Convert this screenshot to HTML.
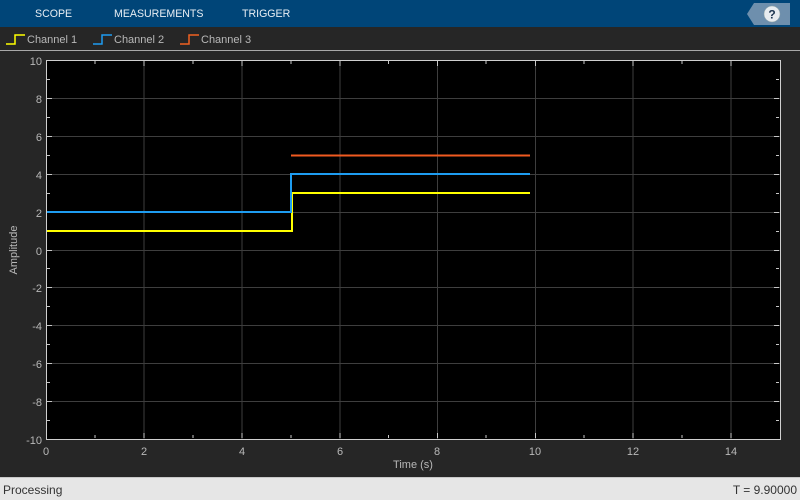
<!DOCTYPE html>
<html><head><style>
html,body{margin:0;padding:0;width:800px;height:500px;overflow:hidden;background:#262626;font-family:"Liberation Sans",sans-serif}
</style></head><body>
<svg width="800" height="500" xmlns="http://www.w3.org/2000/svg" font-family="Liberation Sans, sans-serif">
<rect x="0" y="0" width="800" height="27" fill="#004578"/>
<g fill="#e8eef4" font-size="10.6">
<text x="35" y="17">SCOPE</text>
<text x="114" y="17">MEASUREMENTS</text>
<text x="242" y="17">TRIGGER</text>
</g>
<polygon points="754,3 790,3 790,25 754,25 747,14" fill="#6e8fad"/>
<circle cx="772" cy="14" r="8" fill="#e8ecf0" stroke="#9aa" stroke-width="0.5"/>
<text x="772" y="18.5" text-anchor="middle" font-size="12" font-weight="bold" fill="#1d3550">?</text>
<rect x="0" y="27" width="800" height="23" fill="#262626"/>
<g fill="none" stroke-width="1.5">
<polyline points="6,44 15,44 15,35 25,35" stroke="#ffff00"/>
<polyline points="93,44 102,44 102,35 112,35" stroke="#1e9cf0"/>
<polyline points="180,44 189,44 189,35 199,35" stroke="#f06020"/>
</g>
<g fill="#b8b8b8" font-size="11">
<text x="27" y="43">Channel 1</text>
<text x="114" y="43">Channel 2</text>
<text x="201" y="43">Channel 3</text>
</g>
<line x1="0" y1="50.5" x2="800" y2="50.5" stroke="#a8a8a8"/>
<rect x="46" y="60" width="734" height="379" fill="#000"/>
<g stroke="#3e3e3e" stroke-width="1">
<line x1="144" y1="60" x2="144" y2="439"/><line x1="242" y1="60" x2="242" y2="439"/>
<line x1="340" y1="60" x2="340" y2="439"/><line x1="437.5" y1="60" x2="437.5" y2="439"/>
<line x1="535.5" y1="60" x2="535.5" y2="439"/><line x1="633" y1="60" x2="633" y2="439"/>
<line x1="731" y1="60" x2="731" y2="439"/>
<line x1="46" y1="98.5" x2="780" y2="98.5"/><line x1="46" y1="136.5" x2="780" y2="136.5"/>
<line x1="46" y1="174.5" x2="780" y2="174.5"/><line x1="46" y1="212.5" x2="780" y2="212.5"/>
<line x1="46" y1="250.5" x2="780" y2="250.5"/><line x1="46" y1="287.5" x2="780" y2="287.5"/>
<line x1="46" y1="325.5" x2="780" y2="325.5"/><line x1="46" y1="363.5" x2="780" y2="363.5"/>
<line x1="46" y1="401.5" x2="780" y2="401.5"/>
</g>
<g stroke="#c8c8c8" stroke-width="1">
<path d="M95,61v3M193,61v3M291,61v3M388.5,61v3M486,61v3M584,61v3M682,61v3M95,438v-3M193,438v-3M291,438v-3M388.5,438v-3M486,438v-3M584,438v-3M682,438v-3"/>
<path d="M144,61v5M242,61v5M340,61v5M437.5,61v5M535.5,61v5M633,61v5M731,61v5M144,438v-5M242,438v-5M340,438v-5M437.5,438v-5M535.5,438v-5M633,438v-5M731,438v-5"/>
<path d="M47,79.5h3M47,117.5h3M47,155.5h3M47,193.5h3M47,231.5h3M47,268.5h3M47,306.5h3M47,344.5h3M47,382.5h3M47,420.5h3M779,79.5h-3M779,117.5h-3M779,155.5h-3M779,193.5h-3M779,231.5h-3M779,268.5h-3M779,306.5h-3M779,344.5h-3M779,382.5h-3M779,420.5h-3"/>
<path d="M47,98.5h5M47,136.5h5M47,174.5h5M47,212.5h5M47,250.5h5M47,287.5h5M47,325.5h5M47,363.5h5M47,401.5h5M779,98.5h-5M779,136.5h-5M779,174.5h-5M779,212.5h-5M779,250.5h-5M779,287.5h-5M779,325.5h-5M779,363.5h-5M779,401.5h-5"/>
</g>
<rect x="46.5" y="60.5" width="734" height="379" fill="none" stroke="#d0d0d0"/>
<g fill="none" stroke-width="2">
<polyline points="47,231 292,231 292,193 530,193" stroke="#ffff00"/>
<polyline points="47,212 291,212 291,174 530,174" stroke="#1e9cf0"/>
<polyline points="291,155.5 530,155.5" stroke="#f05a20"/>
</g>
<g fill="#b8b8b8" font-size="11" text-anchor="end">
<text x="42" y="65">10</text><text x="42" y="103">8</text><text x="42" y="141">6</text>
<text x="42" y="179">4</text><text x="42" y="217">2</text><text x="42" y="255">0</text>
<text x="42" y="292">-2</text><text x="42" y="330">-4</text><text x="42" y="368">-6</text>
<text x="42" y="406">-8</text><text x="42" y="444">-10</text>
</g>
<g fill="#b8b8b8" font-size="11" text-anchor="middle">
<text x="46" y="455">0</text><text x="144" y="455">2</text><text x="242" y="455">4</text>
<text x="340" y="455">6</text><text x="437" y="455">8</text><text x="535" y="455">10</text>
<text x="633" y="455">12</text><text x="731" y="455">14</text>
<text x="413" y="468">Time (s)</text>
<text transform="translate(17,250) rotate(-90)">Amplitude</text>
</g>
<rect x="0" y="477" width="800" height="23" fill="#e6e6e6"/>
<line x1="0" y1="477.5" x2="800" y2="477.5" stroke="#c8c8c8"/>
<text x="3" y="494" font-size="12" fill="#333">Processing</text>
<text x="797" y="494" font-size="12" fill="#333" text-anchor="end">T = 9.90000</text>
</svg>
</body></html>
